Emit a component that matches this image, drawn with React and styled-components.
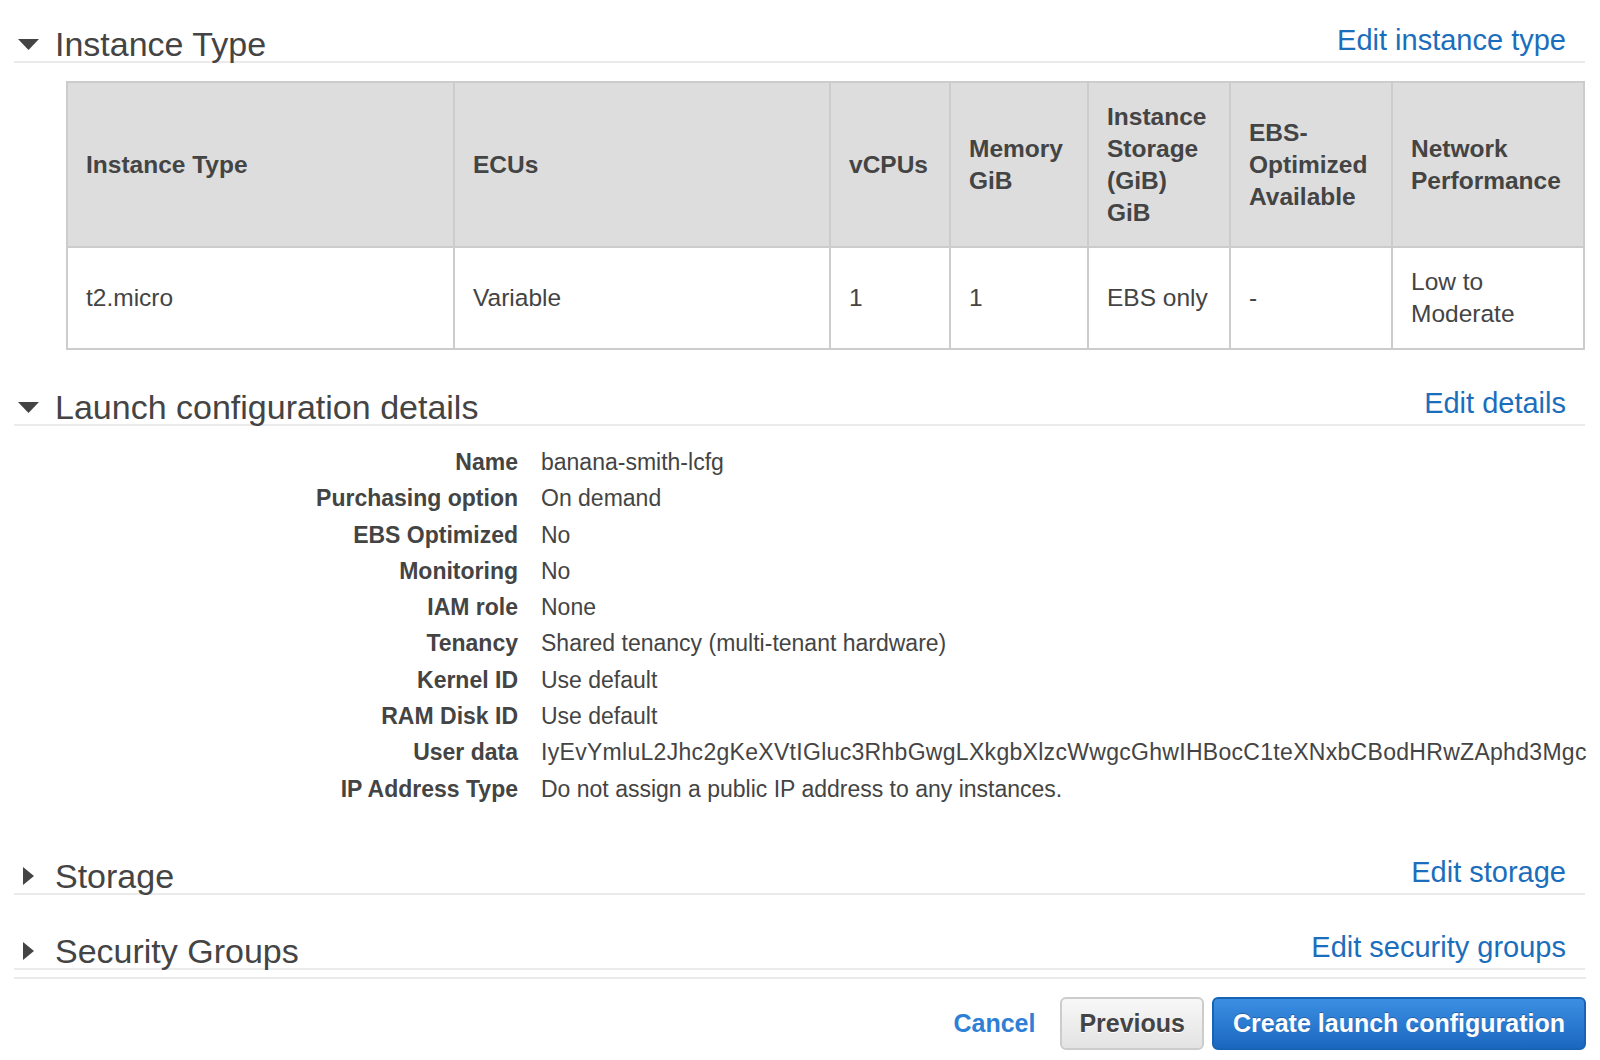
import React from 'react';
import styled, { createGlobalStyle } from 'styled-components';

const GlobalStyle = createGlobalStyle`
	body {
		margin: 0;
		background: #fff;
		color: #444;
		font-family: "Liberation Sans", Helvetica, Arial, sans-serif;
	}
`;

const Page = styled.div`
	padding: 0 15px 0 14px;
`;

const SectionHeader = styled.div`
	display: flex;
	align-items: flex-end;
	justify-content: space-between;
	margin-top: ${(p) => p.$top}px;
	border-bottom: 2px solid #ebebeb;
`;

const Title = styled.h2`
	display: flex;
	align-items: center;
	margin: 0;
	font-size: 34px;
	line-height: 34px;
	font-weight: normal;
	color: #444;
`;

const Caret = styled.span`
	display: flex;
	align-items: center;
	justify-content: center;
	width: 21px;
	margin: 0 16px 0 4px;
`;

const EditLink = styled.a`
	font-size: 29px;
	line-height: 29px;
	padding: 0 19px 6px 0;
	color: #1b6ebc;
	text-decoration: none;
	cursor: pointer;
`;

const Table = styled.table`
	margin: 18px 0 0 52px;
	width: calc(100% - 52px);
	table-layout: fixed;
	border-collapse: collapse;
	font-size: 24.5px;
	line-height: 32px;
	color: #444;
`;

const HeadCell = styled.th`
	background: #dddddd;
	border: 2px solid #cccccc;
	padding: 17.5px 18px;
	text-align: left;
	vertical-align: middle;
	font-weight: bold;
`;

const Cell = styled.td`
	border: 2px solid #cccccc;
	padding: 18px 18px;
	vertical-align: middle;
`;

const Details = styled.dl`
	display: grid;
	grid-template-columns: 504px 1fr;
	column-gap: 23px;
	margin: 18px -3px 0 0;
	font-size: 23px;
	line-height: 36.3px;
`;

const Label = styled.dt`
	text-align: right;
	font-weight: bold;
	white-space: nowrap;
`;

const Value = styled.dd`
	margin: 0;
	white-space: nowrap;
	overflow: hidden;
	letter-spacing: ${(p) => (p.$wide ? '0.3px' : 'normal')};
`;

const Footer = styled.div`
	display: flex;
	align-items: center;
	justify-content: flex-end;
	margin-top: 7px;
	padding-top: 18px;
	border-top: 2px solid #ebebeb;
	margin-right: -1px;
`;

const CancelLink = styled.a`
	font-size: 25px;
	font-weight: bold;
	color: #2e7fd5;
	margin-right: 25px;
	cursor: pointer;
`;

const Button = styled.button`
	height: 53px;
	padding: 0 ${(p) => (p.$primary ? '19px' : '17px')};
	border-radius: 6px;
	font-family: inherit;
	font-size: 25px;
	font-weight: bold;
	cursor: pointer;
	border: 2px solid ${(p) => (p.$primary ? '#1763b5' : '#cccccc')};
	color: ${(p) => (p.$primary ? '#fff' : '#444')};
	background: ${(p) =>
		p.$primary
			? 'linear-gradient(#3b8fe3, #1b67c0)'
			: 'linear-gradient(#f8f8f8, #e3e3e3)'};
	text-shadow: ${(p) => (p.$primary ? '0 -1px 0 rgba(0,0,0,0.25)' : '0 1px 0 #fff')};
	margin-left: ${(p) => (p.$primary ? '8px' : '0')};
`;

function Triangle({ open }) {
	return open ? (
		<svg width="21" height="11" viewBox="0 0 21 11">
			<path d="M0 0 L21 0 L10.5 11 Z" fill="#444" />
		</svg>
	) : (
		<svg width="11" height="18" viewBox="0 0 11 18">
			<path d="M0 0 L11 9 L0 18 Z" fill="#444" />
		</svg>
	);
}

function Section({ title, link, open, top }) {
	return (
		<SectionHeader $top={top}>
			<Title>
				<Caret>
					<Triangle open={open} />
				</Caret>
				{title}
			</Title>
			<EditLink>{link}</EditLink>
		</SectionHeader>
	);
}

const details = [
	['Name', 'banana-smith-lcfg'],
	['Purchasing option', 'On demand'],
	['EBS Optimized', 'No'],
	['Monitoring', 'No'],
	['IAM role', 'None'],
	['Tenancy', 'Shared tenancy (multi-tenant hardware)'],
	['Kernel ID', 'Use default'],
	['RAM Disk ID', 'Use default'],
	['User data', 'IyEvYmluL2Jhc2gKeXVtIGluc3RhbGwgLXkgbXlzcWwgcGhwIHBocC1teXNxbCBodHRwZAphd3Mgc', true],
	['IP Address Type', 'Do not assign a public IP address to any instances.'],
];

export default function App() {
	return (
		<Page>
			<GlobalStyle />
			<Section title="Instance Type" link="Edit instance type" open top={26} />
			<Table>
				<colgroup>
					<col style={{ width: 387 }} />
					<col style={{ width: 376 }} />
					<col style={{ width: 120 }} />
					<col style={{ width: 138 }} />
					<col style={{ width: 142 }} />
					<col style={{ width: 162 }} />
					<col />
				</colgroup>
				<thead>
					<tr>
						<HeadCell>Instance Type</HeadCell>
						<HeadCell>ECUs</HeadCell>
						<HeadCell>vCPUs</HeadCell>
						<HeadCell>
							Memory
							<br />
							GiB
						</HeadCell>
						<HeadCell>
							Instance
							<br />
							Storage
							<br />
							(GiB)
							<br />
							GiB
						</HeadCell>
						<HeadCell>
							EBS-
							<br />
							Optimized
							<br />
							Available
						</HeadCell>
						<HeadCell>
							Network
							<br />
							Performance
						</HeadCell>
					</tr>
				</thead>
				<tbody>
					<tr>
						<Cell>t2.micro</Cell>
						<Cell>Variable</Cell>
						<Cell>1</Cell>
						<Cell>1</Cell>
						<Cell>EBS only</Cell>
						<Cell>-</Cell>
						<Cell>
							Low to
							<br />
							Moderate
						</Cell>
					</tr>
				</tbody>
			</Table>

			<Section title="Launch configuration details" link="Edit details" open top={39} />
			<Details>
				{details.map(([label, value, wide]) => (
					<React.Fragment key={label}>
						<Label>{label}</Label>
						<Value $wide={wide}>{value}</Value>
					</React.Fragment>
				))}
			</Details>

			<Section title="Storage" link="Edit storage" top={51} />
			<Section title="Security Groups" link="Edit security groups" top={38} />

			<Footer>
				<CancelLink>Cancel</CancelLink>
				<Button>Previous</Button>
				<Button $primary>Create launch configuration</Button>
			</Footer>
		</Page>
	);
}
